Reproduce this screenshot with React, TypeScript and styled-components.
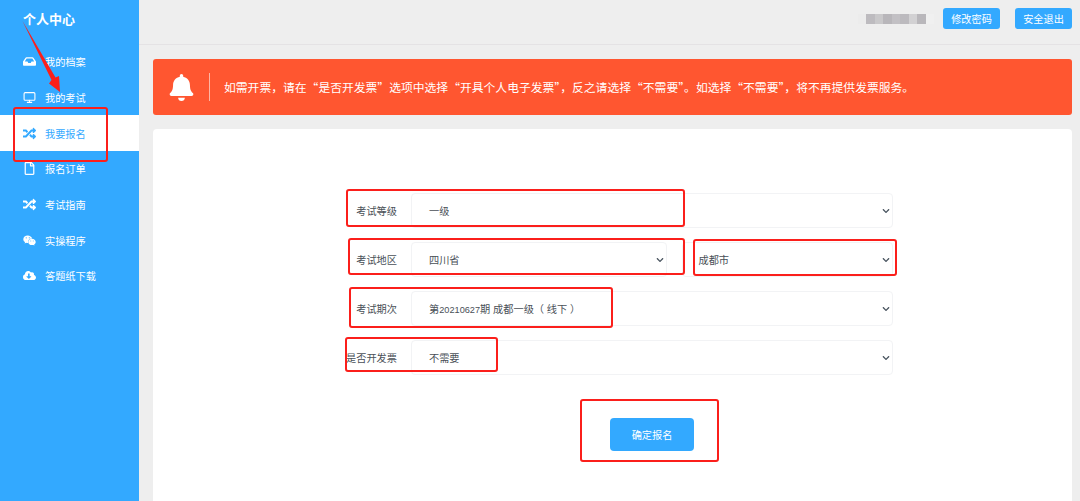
import React from "react";
import styled, { createGlobalStyle } from "styled-components";
import { FaInbox, FaRandom, FaRegFile, FaWeixin, FaCloudDownloadAlt, FaBell, FaChevronDown } from "react-icons/fa";
import { FiMonitor } from "react-icons/fi";

const Global = createGlobalStyle`
  html, body { margin: 0; padding: 0; height: 100%; overflow: hidden; }
  body { font-family: "Liberation Sans", "Noto Sans CJK SC", sans-serif; background: #eeeeee; }
  * { box-sizing: border-box; }
`;

const Page = styled.div`
  position: relative;
  display: flex;
  width: 1080px;
  height: 501px;
  overflow: hidden;
`;

const Sidebar = styled.aside`
  flex: 0 0 139px;
  background: #33a9ff;
  color: #fff;
`;

const Brand = styled.div`
  height: 44px;
  padding: 11px 0 0 23px;
  font-size: 13px;
  line-height: 18px;
  font-weight: 700;
`;

const Nav = styled.nav`
  display: flex;
  flex-direction: column;
`;

const NavItem = styled.div<{ $active?: boolean }>`
  display: flex;
  align-items: center;
  height: 35.7px;
  padding-left: 23px;
  gap: 9px;
  font-size: 10.2px;
  background: ${(p) => (p.$active ? "#ffffff" : "transparent")};
  color: ${(p) => (p.$active ? "#33a9ff" : "#ffffff")};
`;

const NavIcon = styled.span`
  display: flex;
  align-items: center;
  justify-content: center;
  width: 13px;
  font-size: 13px;
`;

const Main = styled.main`
  flex: 1;
  display: flex;
  flex-direction: column;
  min-width: 0;
`;

const Topbar = styled.header`
  flex: 0 0 45px;
  display: flex;
  align-items: flex-start;
  justify-content: flex-end;
  gap: 15px;
  padding: 8px 8px 0 0;
  border-bottom: 1px solid #e4e2e4;
`;

const Mosaic = styled.div`
  display: flex;
  height: 10px;
  margin: 6px -6px 0 0;
`;

const Pixel = styled.span<{ $tone: string }>`
  width: 8.5px;
  height: 10px;
  background: ${(p) => p.$tone};
`;

const TopButton = styled.button`
  width: 57px;
  height: 21px;
  border: 0;
  border-radius: 3px;
  padding: 0;
  background: #33a9ff;
  color: #fff;
  font: 10.2px "Liberation Sans", "Noto Sans CJK SC", sans-serif;
`;

const Content = styled.div`
  flex: 1;
  display: flex;
  flex-direction: column;
  gap: 14px;
  padding: 14px 8px 0 14px;
  min-height: 0;
`;

const Alert = styled.div`
  flex: 0 0 56px;
  display: flex;
  align-items: center;
  background: #ff5630;
  border-radius: 3px;
  color: #fff;
  padding-left: 15px;
  font-family: "Noto Sans CJK SC", sans-serif;
  font-size: 11.8px;
`;

const AlertText = styled.span`
  margin-top: -2px;
`;

const Bell = styled.span`
  display: flex;
  font-size: 27px;
`;

const AlertRule = styled.span`
  width: 1px;
  height: 28px;
  margin: 0 14px;
  background: #ffb5a3;
`;

const Card = styled.section`
  flex: 1;
  background: #fff;
  border-radius: 4px 4px 0 0;
  padding: 64px 0 0 193px;
`;

const Form = styled.div`
  display: flex;
  flex-direction: column;
  gap: 14px;
  width: 547px;
`;

const Row = styled.div`
  display: flex;
  height: 35px;
`;

const Label = styled.div`
  flex: 0 0 65px;
  display: flex;
  align-items: center;
  justify-content: flex-end;
  padding-right: 14px;
  white-space: nowrap;
  font-size: 10.2px;
  color: #495057;
`;

const Select = styled.div<{ $grow?: number; $pad?: number }>`
  flex: ${(p) => p.$grow ?? 1} 1 0;
  display: flex;
  align-items: center;
  justify-content: space-between;
  padding: 0 2px 0 ${(p) => p.$pad ?? 17}px;
  border: 1px solid #f2f3f5;
  border-radius: 4px;
  font-size: 10.2px;
  color: #495057;
  background: #fff;
`;

const Digits = styled.span`
  font-size: 9.2px;
`;

const Chevron = styled(FaChevronDown)`
  font-size: 8px;
  color: #4a5560;
`;

const Spacer = styled.div`
  flex: 0 0 15px;
`;

const Submit = styled.button`
  display: block;
  width: 84px;
  height: 33px;
  margin: 15px 0 0 264px;
  border: 0;
  border-radius: 4px;
  background: #33a9ff;
  color: #fff;
  font: 10.2px "Liberation Sans", "Noto Sans CJK SC", sans-serif;
`;

const Actions = styled.div`
  padding-top: 14px;
`;

const Mark = styled.div<{ $x: number; $y: number; $w: number; $h: number }>`
  position: absolute;
  left: ${(p) => p.$x}px;
  top: ${(p) => p.$y}px;
  width: ${(p) => p.$w}px;
  height: ${(p) => p.$h}px;
  border: 2.5px solid #fb1f1b;
  border-radius: 3px;
  pointer-events: none;
`;

const ArrowLayer = styled.svg`
  position: absolute;
  left: 0;
  top: 0;
  pointer-events: none;
`;

const items = [
  { label: "我的档案", icon: <FaInbox /> },
  { label: "我的考试", icon: <FiMonitor /> },
  { label: "我要报名", icon: <FaRandom />, active: true },
  { label: "报名订单", icon: <FaRegFile /> },
  { label: "考试指南", icon: <FaRandom /> },
  { label: "实操程序", icon: <FaWeixin /> },
  { label: "答题纸下载", icon: <FaCloudDownloadAlt /> },
];

const tones = ["#ececec", "#bdbbbf", "#c9c8ca", "#b8b6ba", "#c2c0c4", "#bcbabe", "#d2d1d3", "#b9b7bb", "#f0f0f0"];

const marks = [
  { x: 13, y: 107, w: 95, h: 55 },
  { x: 346, y: 189, w: 339, h: 38 },
  { x: 348, y: 238, w: 337, h: 37 },
  { x: 693, y: 239, w: 204, h: 37 },
  { x: 349, y: 287, w: 264, h: 41 },
  { x: 345, y: 337, w: 153, h: 35 },
  { x: 580, y: 399, w: 139, h: 63 },
];

export default function App() {
  return (
    <Page>
      <Global />
      <Sidebar>
        <Brand>个人中心</Brand>
        <Nav>
          {items.map((item) => (
            <NavItem key={item.label} $active={item.active}>
              <NavIcon>{item.icon}</NavIcon>
              {item.label}
            </NavItem>
          ))}
        </Nav>
      </Sidebar>
      <Main>
        <Topbar>
          <Mosaic>
            {tones.map((tone, i) => (
              <Pixel key={i} $tone={tone} />
            ))}
          </Mosaic>
          <TopButton>修改密码</TopButton>
          <TopButton>安全退出</TopButton>
        </Topbar>
        <Content>
          <Alert>
            <Bell>
              <FaBell />
            </Bell>
            <AlertRule />
            <AlertText>如需开票，请在“是否开发票”选项中选择“开具个人电子发票”，反之请选择“不需要”。如选择“不需要”，将不再提供发票服务。</AlertText>
          </Alert>
          <Card>
            <Form>
              <Row>
                <Label>考试等级</Label>
                <Select>
                  一级
                  <Chevron />
                </Select>
              </Row>
              <Row>
                <Label>考试地区</Label>
                <Select $grow={257}>
                  四川省
                  <Chevron />
                </Select>
                <Spacer />
                <Select $grow={209} $pad={15}>
                  成都市
                  <Chevron />
                </Select>
              </Row>
              <Row>
                <Label>考试期次</Label>
                <Select>
                  <span>
                    第<Digits>20210627</Digits>期 成都一级（ 线下 ）
                  </span>
                  <Chevron />
                </Select>
              </Row>
              <Row>
                <Label>是否开发票</Label>
                <Select>
                  不需要
                  <Chevron />
                </Select>
              </Row>
              <Actions>
                <Submit>确定报名</Submit>
              </Actions>
            </Form>
          </Card>
        </Content>
      </Main>
      {marks.map((m) => (
        <Mark key={`${m.x}-${m.y}`} $x={m.x} $y={m.y} $w={m.w} $h={m.h} />
      ))}
      <ArrowLayer width="120" height="110" viewBox="0 0 120 110">
        <path d="M22.5 21 L55.5 77.5 L59 76 L60 92 L49 83.5 L51.5 80 Z" fill="#fb1f1b" />
      </ArrowLayer>
    </Page>
  );
}
